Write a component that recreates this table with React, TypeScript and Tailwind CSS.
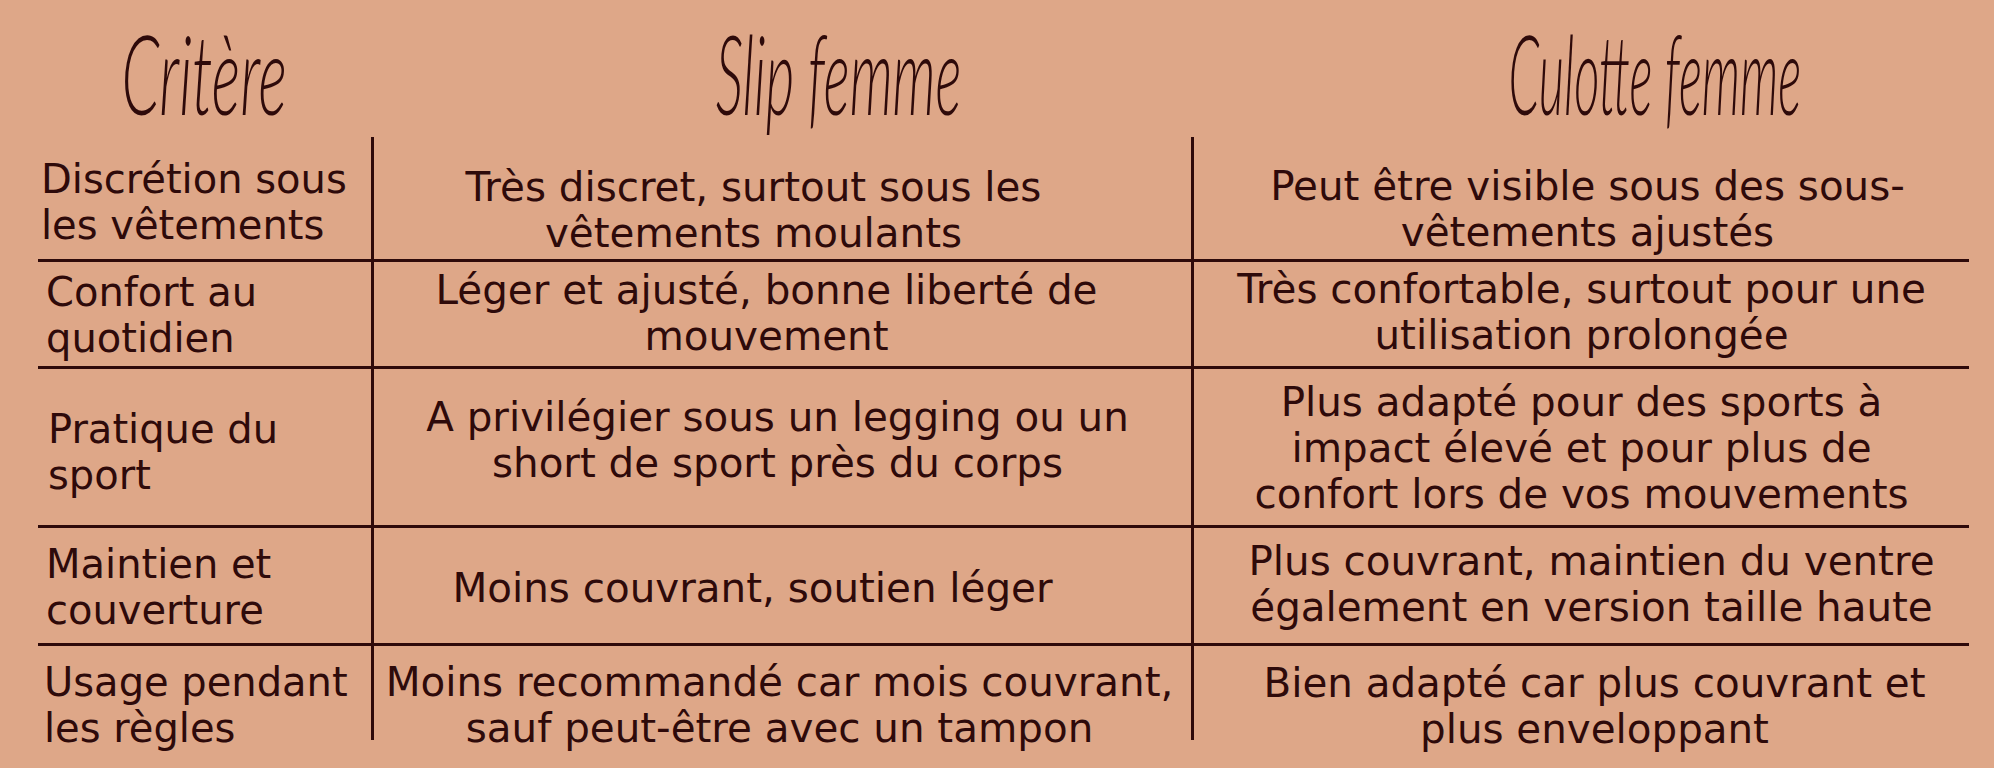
const rows = [
  {
    h: "h-[122px]",
    first: true,
    c1: { pad: "pt-[19px] pl-[3px]", lines: ["Discrétion sous", "les vêtements"] },
    c2: { pad: "pt-[27px] pr-[58px]", lines: ["Très discret, surtout sous les", "vêtements moulants"] },
    c3: { pad: "pt-[26px] pl-[12px]", lines: ["Peut être visible sous des sous-", "vêtements ajustés"] },
  },
  {
    h: "h-[107px]",
    c1: { pad: "pt-[7px] pl-[8px]", lines: ["Confort au", "quotidien"] },
    c2: { pad: "pt-[5px] pr-[32px]", lines: ["Léger et ajusté, bonne liberté de", "mouvement"] },
    c3: { pad: "pt-[4px] pl-0", lines: ["Très confortable, surtout pour une", "utilisation prolongée"] },
  },
  {
    h: "h-[159px]",
    c1: { pad: "pt-[37px] pl-[10px]", lines: ["Pratique du", "sport"] },
    c2: { pad: "pt-[25px] pr-[10px]", lines: ["A privilégier sous un legging ou un", "short de sport près du corps"] },
    c3: {
      pad: "pt-[10px] pl-0",
      lines: ["Plus adapté pour des sports à", "impact élevé et pour plus de", "confort lors de vos mouvements"],
    },
  },
  {
    h: "h-[118px]",
    c1: { pad: "pt-[13px] pl-[8px]", lines: ["Maintien et", "couverture"] },
    c2: { pad: "pt-[37px] pr-[60px]", lines: ["Moins couvrant, soutien léger"] },
    c3: { pad: "pt-[10px] pl-[20px]", lines: ["Plus couvrant, maintien du ventre", "également en version taille haute"] },
  },
  {
    h: "h-[97px]",
    c1: { pad: "pt-[13px] pl-[6px]", lines: ["Usage pendant", "les règles"] },
    c2: { pad: "pt-[13px] pr-[6px]", lines: ["Moins recommandé car mois couvrant,", "sauf peut-être avec un tampon"] },
    c3: { pad: "pt-[14px] pl-[26px]", lines: ["Bien adapté car plus couvrant et", "plus enveloppant"] },
  },
];

const Lines = ({ lines }: { lines: string[] }) => (
  <>
    {lines.map((l) => (
      <div key={l} className="whitespace-nowrap">
        {l}
      </div>
    ))}
  </>
);

export default function App() {
  return (
    <div className="w-[1994px] h-[768px] bg-[#dea788] text-[#2e0a0a] font-['DejaVu_Sans',sans-serif] overflow-hidden">
      {/* Script headings */}
      <div className="flex h-[137px] font-['Lato',sans-serif] italic font-light text-[110px] leading-none">
        <div className="w-[373px] flex justify-center pt-[17px] pl-[36px]">
          <span className="inline-block scale-x-[0.55] whitespace-nowrap">Critère</span>
        </div>
        <div className="w-[819px] flex justify-center pt-[17px] pl-[112px]">
          <span className="inline-block scale-x-[0.5] whitespace-nowrap">Slip femme</span>
        </div>
        <div className="w-[802px] flex justify-center pt-[17px] pl-[124px]">
          <span className="inline-block scale-x-[0.445] whitespace-nowrap">Culotte femme</span>
        </div>
      </div>

      {/* Table */}
      <div className="ml-[38px] w-[1931px] text-[40px] leading-[46px]">
        {rows.map((r, i) => (
          <div key={i} className={`flex ${r.h} ${r.first ? "" : "border-t-[3px] border-[#2e0a0a]"}`}>
            <div className={`w-[336px] shrink-0 border-r-[3px] border-[#2e0a0a] ${r.c1.pad}`}>
              <Lines lines={r.c1.lines} />
            </div>
            <div className={`w-[820px] shrink-0 border-r-[3px] border-[#2e0a0a] text-center text-[40.4px] ${r.c2.pad}`}>
              <Lines lines={r.c2.lines} />
            </div>
            <div className={`w-[775px] shrink-0 text-center text-[40.4px] ${r.c3.pad}`}>
              <Lines lines={r.c3.lines} />
            </div>
          </div>
        ))}
      </div>
    </div>
  );
}
